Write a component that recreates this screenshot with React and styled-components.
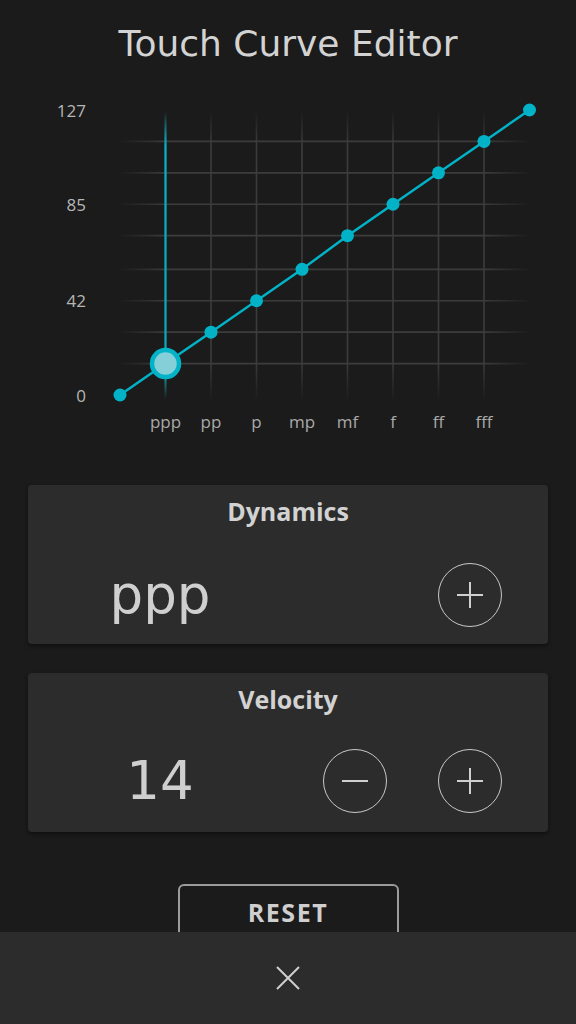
import React from "react";
import styled, { createGlobalStyle } from "styled-components";

const GlobalStyle = createGlobalStyle`
  html, body { margin: 0; padding: 0; background: #1b1b1b; }
  body { font-family: "Open Sans", "DejaVu Sans", sans-serif; color: #d0d0d0; }
  * { box-sizing: border-box; }
`;

const Page = styled.div`
  width: 576px;
  min-height: 1024px;
  display: flex;
  flex-direction: column;
  align-items: center;
  padding-top: 22px;
`;

const Title = styled.h1`
  margin: 0;
  font-family: "DejaVu Sans", Verdana, sans-serif;
  font-weight: 400;
  font-size: 36px;
  line-height: 44px;
  color: #d3d3d3;
  text-align: center;
`;

const ChartSvg = styled.svg`
  display: block;
  width: 576px;
  height: 374px;
`;

const Cards = styled.div`
  width: 520px;
  margin-top: 45px;
  display: flex;
  flex-direction: column;
  gap: 29px;
`;

const Card = styled.section`
  height: 159px;
  background: #2c2c2c;
  border-radius: 4px;
  box-shadow: 0 2px 4px rgba(0, 0, 0, 0.45);
  padding-top: 11px;
  display: flex;
  flex-direction: column;
`;

const CardTitle = styled.h2`
  margin: 0;
  font-family: "Open Sans", sans-serif;
  font-weight: 700;
  font-size: 25px;
  line-height: 30px;
  color: #d2d2d2;
  text-align: center;
`;

const Row = styled.div`
  margin-top: ${(p) => p.$gap}px;
  display: grid;
  grid-template-columns: 264px 1fr;
  align-items: center;
  height: 64px;
`;

const Value = styled.div`
  font-family: "DejaVu Sans", Verdana, sans-serif;
  font-size: 53px;
  line-height: 64px;
  color: #cfcfcf;
  text-align: center;
`;

const Buttons = styled.div`
  display: flex;
  justify-content: flex-end;
  gap: 51px;
  padding-right: 46px;
`;

const RoundButton = styled.button`
  width: 64px;
  height: 64px;
  border-radius: 50%;
  border: 1.5px solid #c8c8c8;
  background: transparent;
  padding: 0;
  display: flex;
  align-items: center;
  justify-content: center;
  color: #d0d0d0;
  cursor: pointer;
`;

const ResetButton = styled.button`
  margin-top: 52px;
  width: 221px;
  height: 60px;
  border: 2px solid #9b9b9b;
  border-radius: 6px;
  background: transparent;
  color: #cfcfcf;
  font-family: "Open Sans", sans-serif;
  font-weight: 700;
  font-size: 25px;
  line-height: 52px;
  padding: 0 0 4px;
  display: flex;
  justify-content: center;
  align-items: flex-start;
  letter-spacing: 1.5px;
`;

const BottomBar = styled.footer`
  position: fixed;
  left: 0;
  right: 0;
  bottom: 0;
  height: 92px;
  background: #2c2c2c;
  display: flex;
  align-items: center;
  justify-content: center;
`;

const TEAL = "#02b3c7";
const values = [0, 14, 28, 42, 56, 71, 85, 99, 113, 127];
const dyn = ["ppp", "pp", "p", "mp", "mf", "f", "ff", "fff"];
const X0 = 120;
const STEP = 45.5;
const yOf = (v) => 395 - (v * 285) / 127;
const xOf = (i) => X0 + i * STEP;

function Chart() {
  const pts = values.map((v, i) => [xOf(i), yOf(v)]);
  const gridYs = values.slice(1, 9).map(yOf);
  const gridXs = dyn.map((_, i) => xOf(i + 1));
  return (
    <ChartSvg viewBox="0 66 576 374">
      <defs>
        <linearGradient id="hfade" gradientUnits="userSpaceOnUse" x1="118" y1="0" x2="532" y2="0">
          <stop offset="0" stopColor="#3c3c3c" stopOpacity="0" />
          <stop offset="0.12" stopColor="#3c3c3c" stopOpacity="1" />
          <stop offset="0.88" stopColor="#3c3c3c" stopOpacity="1" />
          <stop offset="1" stopColor="#3c3c3c" stopOpacity="0" />
        </linearGradient>
        <linearGradient id="vfade" gradientUnits="userSpaceOnUse" x1="0" y1="110" x2="0" y2="402">
          <stop offset="0" stopColor="#3c3c3c" stopOpacity="0" />
          <stop offset="0.12" stopColor="#3c3c3c" stopOpacity="1" />
          <stop offset="0.86" stopColor="#3c3c3c" stopOpacity="1" />
          <stop offset="1" stopColor="#3c3c3c" stopOpacity="0" />
        </linearGradient>
        <linearGradient id="sfade" gradientUnits="userSpaceOnUse" x1="0" y1="112" x2="0" y2="398">
          <stop offset="0" stopColor={TEAL} stopOpacity="0" />
          <stop offset="0.12" stopColor={TEAL} stopOpacity="1" />
          <stop offset="0.9" stopColor={TEAL} stopOpacity="0.9" />
          <stop offset="1" stopColor={TEAL} stopOpacity="0" />
        </linearGradient>
      </defs>
      {gridYs.map((y) => (
        <line key={"h" + y} x1="118" x2="532" y1={y} y2={y} stroke="url(#hfade)" strokeWidth="1.6" />
      ))}
      {gridXs.map((x) => (
        <line key={"v" + x} x1={x} x2={x} y1="110" y2="402" stroke="url(#vfade)" strokeWidth="1.6" />
      ))}
      <line x1={xOf(1)} x2={xOf(1)} y1="112" y2="398" stroke="url(#sfade)" strokeWidth="2.2" />
      <polyline
        points={pts.map((p) => p.join(",")).join(" ")}
        fill="none"
        stroke={TEAL}
        strokeWidth="2.5"
      />
      {pts.map(([x, y], i) =>
        i === 1 ? null : <circle key={i} cx={x} cy={y} r="6.5" fill={TEAL} />
      )}
      <circle cx={pts[1][0]} cy={pts[1][1]} r="13.5" fill="#84cfd8" stroke={TEAL} strokeWidth="4.5" />
      <g fontFamily="'Open Sans', sans-serif" fontSize="17" fill="#b6b6b6" textAnchor="end">
        {[127, 85, 42, 0].map((v) => (
          <text key={v} x="86" y={yOf(v)} dominantBaseline="central">
            {v}
          </text>
        ))}
      </g>
      <g fontFamily="'Open Sans', sans-serif" fontSize="17" fill="#a9a9a9" textAnchor="middle">
        {dyn.map((d, i) => (
          <text key={d} x={xOf(i + 1)} y="421" dominantBaseline="central">
            {d}
          </text>
        ))}
      </g>
    </ChartSvg>
  );
}

const PlusIcon = () => (
  <svg width="30" height="30" viewBox="0 0 30 30">
    <path d="M15 2v26M2 15h26" stroke="#d0d0d0" strokeWidth="2" fill="none" />
  </svg>
);

const MinusIcon = () => (
  <svg width="30" height="30" viewBox="0 0 30 30">
    <path d="M2 15h26" stroke="#d0d0d0" strokeWidth="2" fill="none" />
  </svg>
);

const CloseIcon = () => (
  <svg width="24" height="24" viewBox="0 0 24 24">
    <path d="M1 1l22 22M23 1L1 23" stroke="#cfcfcf" strokeWidth="2" fill="none" />
  </svg>
);

export default function App() {
  return (
    <>
      <GlobalStyle />
      <Page>
        <Title>Touch Curve Editor</Title>
        <Chart />
        <Cards>
          <Card>
            <CardTitle>Dynamics</CardTitle>
            <Row $gap={37}>
              <Value>ppp</Value>
              <Buttons>
                <RoundButton aria-label="increase dynamics">
                  <PlusIcon />
                </RoundButton>
              </Buttons>
            </Row>
          </Card>
          <Card>
            <CardTitle>Velocity</CardTitle>
            <Row $gap={35}>
              <Value>14</Value>
              <Buttons>
                <RoundButton aria-label="decrease velocity">
                  <MinusIcon />
                </RoundButton>
                <RoundButton aria-label="increase velocity">
                  <PlusIcon />
                </RoundButton>
              </Buttons>
            </Row>
          </Card>
        </Cards>
        <ResetButton>RESET</ResetButton>
      </Page>
      <BottomBar>
        <CloseIcon />
      </BottomBar>
    </>
  );
}
